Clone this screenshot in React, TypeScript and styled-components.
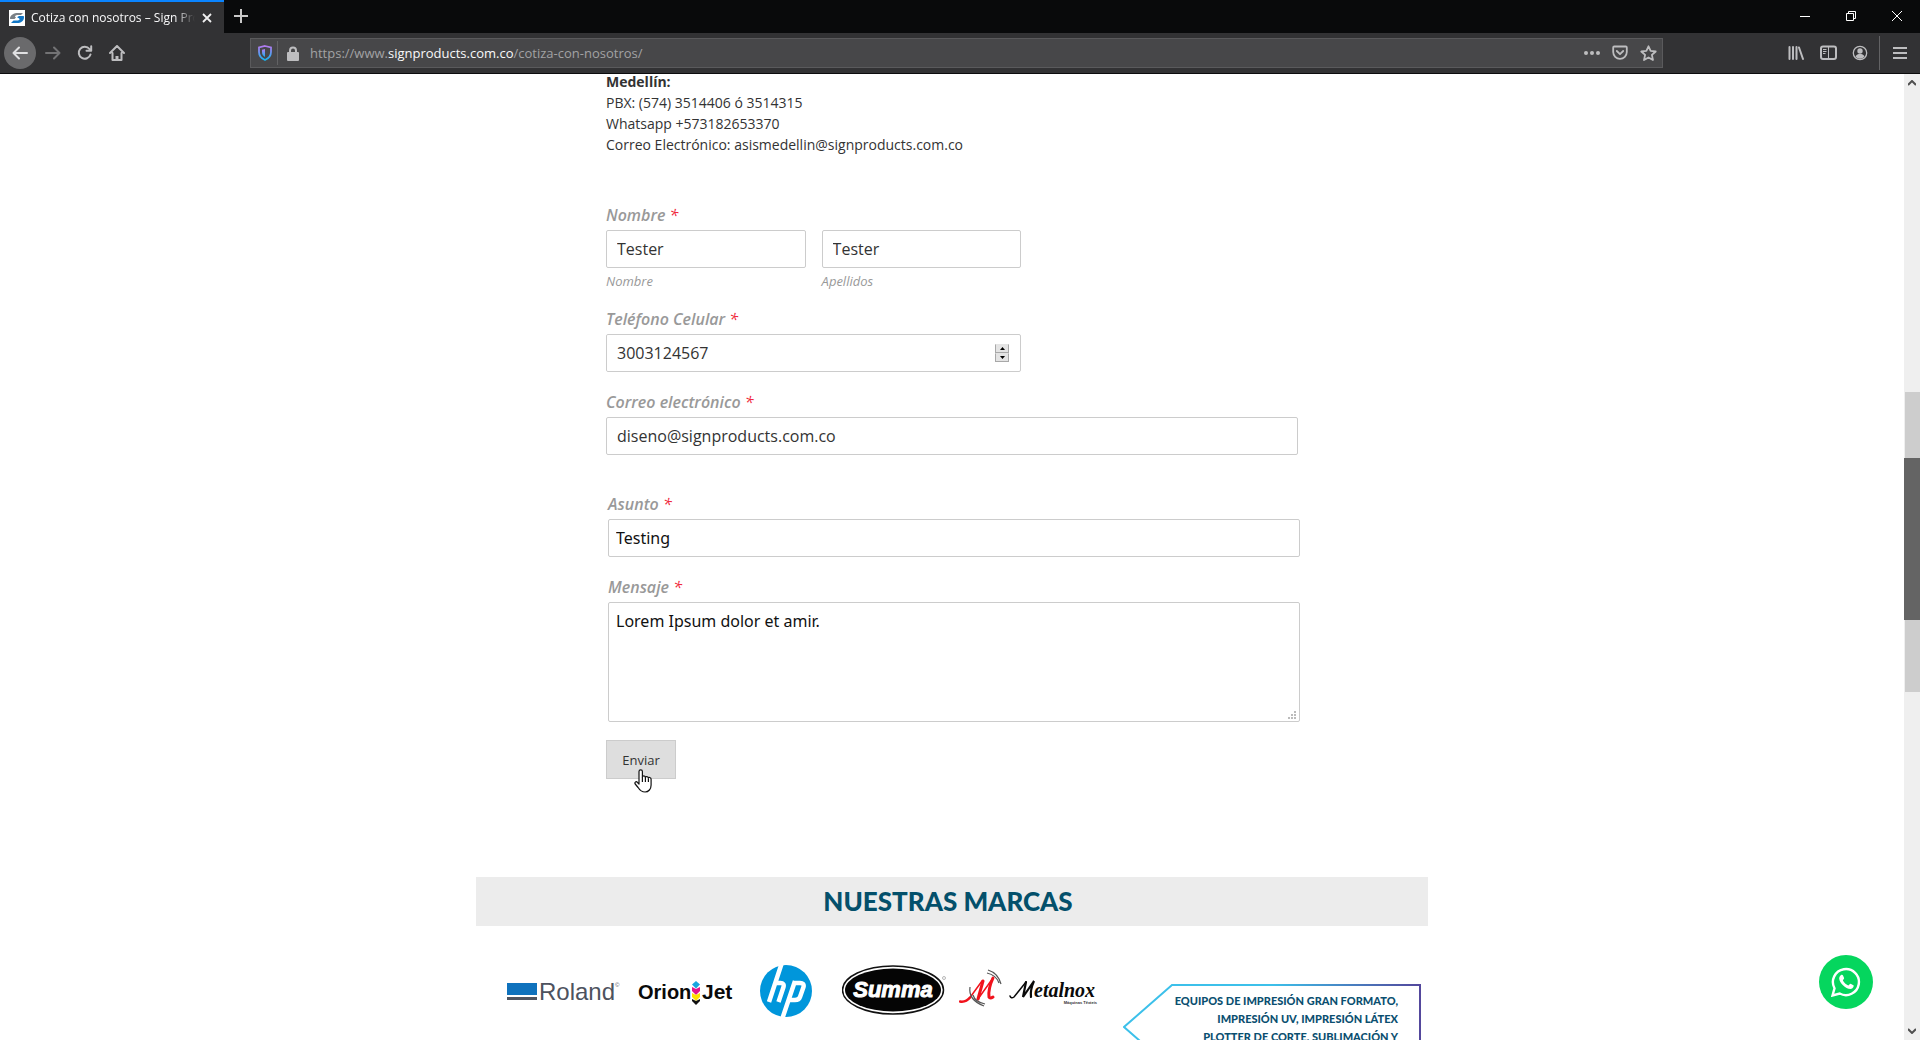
import React from "react";
import styled, { createGlobalStyle } from "styled-components";

const Global = createGlobalStyle`
  *, *::before, *::after { box-sizing: border-box; }
  body { margin: 0; background: #fff; font-family: "Open Sans", "Noto Sans", sans-serif; }
  button, input, textarea { font: inherit; color: inherit; margin: 0; }
  svg { display: block; flex: none; }
`;

const Window = styled.div`
  display: grid;
  grid-template-rows: 33px 41px minmax(0, 1fr);
  height: 100vh;
  overflow: hidden;
`;

/* Browser chrome */
const TabStrip = styled.header`
  display: flex;
  justify-content: space-between;
  background: #090a0b;
  color: #f9f9fa;
`;
const TabList = styled.div`
  display: flex;
`;
const Tab = styled.div`
  display: flex;
  align-items: center;
  width: 224px;
  padding: 0 11px 0 9px;
  gap: 6px;
  background: #323234;
  border-top: 2px solid #0a84ff;
  font-size: 12px;
`;
const TabTitle = styled.span`
  flex: 1;
  overflow: hidden;
  white-space: nowrap;
  mask-image: linear-gradient(to right, #000 calc(100% - 20px), transparent);
`;
const GhostButton = styled.button<{ $w?: number }>`
  display: flex;
  align-items: center;
  justify-content: center;
  width: ${(p) => p.$w ?? 32}px;
  height: 32px;
  padding: 0;
  border: 0;
  background: none;
  color: #bdbdbf;
`;
const BackButton = styled(GhostButton)`
  margin-right: 1px;
  border-radius: 50%;
  background: #6a6a6c;
  color: #e0e0e2;
`;
const ForwardButton = styled(GhostButton)`
  color: #737375;
`;
const CaptionButtons = styled.div`
  display: flex;
  & ${GhostButton} { color: #fff; }
`;
const Toolbar = styled.nav`
  display: flex;
  align-items: center;
  justify-content: space-between;
  padding-left: 4px;
  background: #323234;
  border-bottom: 1px solid #0c0c0d;
`;
const ToolGroup = styled.div`
  display: flex;
  align-items: center;
  width: 246px;
`;
const MenuGroup = styled(ToolGroup)`
  justify-content: flex-end;
  width: 257px;
`;
const AddressBar = styled.div`
  flex: 1;
  display: flex;
  align-items: center;
  height: 30px;
  padding: 0 0 0 2px;
  background: #474749;
  border: 1px solid #5a5a5c;
`;
const Divider = styled.span`
  width: 1px;
  height: 24px;
  background: #626264;
`;
const TallDivider = styled(Divider)`
  height: 34px;
  margin-left: 3px;
`;
const Url = styled.a`
  flex: 1;
  padding-left: 2px;
  font-size: 13px;
  color: #a2a2a4;
  text-decoration: none;
`;
const Host = styled.span`
  color: #f9f9fa;
`;

/* Page */
const Viewport = styled.div`
  display: grid;
  grid-template-columns: minmax(0, 1fr) 16px;
  min-height: 0;
  overflow: hidden;
`;
const Page = styled.main`
  min-height: 0;
  overflow: hidden;
  position: relative;
  color: #333;
`;
const Scrolled = styled.div`
  width: 952px;
  max-width: 100%;
  margin: -3px auto 0;
`;
const Column = styled.div`
  width: 692px;
  max-width: 100%;
  margin: 0 auto;
`;
const Contact = styled.address`
  font-size: 14px;
  line-height: 21px;
  font-style: normal;
`;
const Form = styled.form`
  padding-top: 46px;
`;
const Field = styled.div<{ $medium?: boolean; $gap?: number }>`
  display: flex;
  flex-direction: column;
  width: ${(p) => (p.$medium ? "60%" : "100%")};
  margin-bottom: ${(p) => p.$gap ?? 16}px;
`;
const Label = styled.label`
  height: 29px;
  padding-top: 2px;
  line-height: 24px;
  font-size: 16px;
  font-weight: 600;
  font-style: italic;
  color: #999;
`;
const Required = styled.span`
  color: #f0283c;
  font-weight: 400;
`;
const NameRow = styled.div`
  display: grid;
  grid-template-columns: 1fr 1fr;
  gap: 16px;
`;
const Input = styled.input`
  width: 100%;
  height: 38px;
  padding: 0 10px;
  border: 1px solid #ccc;
  border-radius: 2px;
  background: #fff;
  font-size: 16px;
  outline: none;
`;
const NumberBox = styled.div`
  display: flex;
  align-items: center;
  padding-right: 11px;
  border: 1px solid #ccc;
  border-radius: 2px;
`;
const NumberInput = styled(Input)`
  height: 36px;
  border: 0;
  appearance: textfield;
  &::-webkit-inner-spin-button { display: none; }
`;
const Spinner = styled.div`
  display: grid;
  flex: none;
`;
const SpinButton = styled.button`
  display: grid;
  place-items: center;
  width: 14px;
  height: 9px;
  padding: 0;
  border: 1px solid #a8a8a8;
  border-top-color: #e4e4e4;
  background: #e4e4e4;
  color: #111;
`;
const SubLabel = styled.label`
  height: 28px;
  padding-top: 4px;
  font-size: 13px;
  line-height: 18px;
  font-style: italic;
  color: #999;
`;
const MessageGroup = styled.div`
  margin: 0 -2px 0 2px;
  color: #111;
`;
const PlainInput = styled(Input)`
  padding: 0 7px;
  font-family: "Noto Sans", sans-serif;
`;
const AreaWrap = styled.div`
  position: relative;
  height: 120px;
`;
const TextArea = styled.textarea`
  display: block;
  width: 100%;
  height: 120px;
  padding: 6px 7px;
  border: 1px solid #ccc;
  border-radius: 2px;
  font: 16px/24px "Noto Sans", sans-serif;
  resize: none;
  outline: none;
`;
const Grip = styled.svg`
  position: absolute;
  right: 4px;
  bottom: 3px;
`;
const SubmitRow = styled.div`
  position: relative;
  width: max-content;
`;
const Submit = styled.button`
  display: block;
  width: 70px;
  height: 39px;
  padding: 0;
  border: 1px solid #ccc;
  background: #dedede;
  font-size: 13px;
`;
const Pointer = styled.svg`
  position: absolute;
  left: 28px;
  top: 29px;
`;

const Banner = styled.h2`
  margin: 98px 0 0;
  padding-right: 8px;
  height: 49px;
  background: #ececec;
  color: #04506b;
  font: 900 26px/48px Lato, sans-serif;
  text-align: center;
`;
const Brands = styled.section`
  display: flex;
  justify-content: space-between;
  padding: 39px 6px 0 31px;
`;
const LogoRow = styled.div`
  display: flex;
  align-items: flex-start;
`;
const Callout = styled.div`
  position: relative;
  width: 299px;
  margin-top: 19px;
`;
const CalloutShape = styled.svg`
  position: absolute;
  inset: 0;
`;
const CalloutText = styled.p`
  position: relative;
  margin: 0;
  padding: 8px 24px 0 0;
  font: 900 11px/18px Lato, sans-serif;
  color: #0b4f70;
  text-align: right;
  white-space: nowrap;
`;
const WhatsApp = styled.a`
  position: absolute;
  right: 31px;
  bottom: 31px;
  display: grid;
  place-items: center;
  width: 54px;
  height: 54px;
  border-radius: 50%;
  background: #05d65e;
`;

/* Scroll bar */
const ScrollTrack = styled.div`
  display: flex;
  flex-direction: column;
  align-items: center;
  background: #efefef;
`;
const ScrollButton = styled(GhostButton)`
  width: 16px;
  height: 18px;
  color: #505050;
`;
const ThumbRange = styled.div`
  display: flex;
  flex-direction: column;
  width: 15px;
  flex: 300;
  background: #cdcdcd;
`;
const Thumb = styled.div`
  flex: 162;
  margin: 0 -1px;
  background: #646464;
`;
const TrackSpace = styled.div<{ $grow: number }>`
  flex: ${(p) => p.$grow};
`;

type IconProps = { d: string; size?: number; width?: number };
const Stroke = ({ d, size = 16, width = 2 }: IconProps) => (
  <svg width={size} height={size} viewBox="0 0 16 16" fill="none" stroke="currentColor" strokeWidth={width} strokeLinecap="round" strokeLinejoin="round" aria-hidden="true">
    <path d={d} />
  </svg>
);

const Favicon = () => (
  <svg width="16" height="16" viewBox="0 0 16 16" aria-hidden="true">
    <path fill="#fff" d="M0 0h16v16H0z" />
    <path fill="#7b8086" d="M1 8.500C1 5 5 3 9 3h5l-2 2H9C6.500 5 5 6.500 7 7.500L5.500 9H2C1.300 9 1 9 1 8.500z" />
    <path fill="#1176c5" d="M15 7c0 4-3 6-7 6H2l2.500-2.500H8c2.500 0 3.500-1.500 1.500-2.500L8 7.300 10 6h4c.7 0 1 .4 1 1z" />
  </svg>
);

const Star = () => <Stroke size={17} width={1.7} d="M8 1.2l2 4.4 4.8.5-3.6 3.2 1 4.8L8 11.7l-4.2 2.4 1-4.8L1.200 6.100l4.800-.5z" />;

const Chrome = () => (
  <>
    <TabStrip>
      <TabList>
        <Tab>
          <Favicon />
          <TabTitle>Cotiza con nosotros – Sign Products</TabTitle>
          <GhostButton $w={12} aria-label="Cerrar pestaña"><svg width="10" height="10" viewBox="0 0 10 10" stroke="#f0f0f0" strokeWidth="1.8"><path d="M1 1l8 8M9 1L1 9" /></svg></GhostButton>
        </Tab>
        <GhostButton $w={34} aria-label="Nueva pestaña"><svg width="14" height="14" viewBox="0 0 14 14" stroke="#c8c8c8" strokeWidth="2"><path d="M7 0v14M0 7h14" /></svg></GhostButton>
      </TabList>
      <CaptionButtons>
        <GhostButton $w={46} aria-label="Minimizar"><svg width="10" height="10" stroke="#fff"><path d="M0 5.500h10" /></svg></GhostButton>
        <GhostButton $w={46} aria-label="Restaurar"><svg width="10" height="10" fill="none" stroke="#fff"><path d="M.5 2.500h7v7h-7zM2.500 2.500v-2h7v7h-2" /></svg></GhostButton>
        <GhostButton $w={46} aria-label="Cerrar"><svg width="10" height="10" stroke="#fff"><path d="M0 0l10 10M10 0L0 10" /></svg></GhostButton>
      </CaptionButtons>
    </TabStrip>
    <Toolbar>
      <ToolGroup>
        <BackButton aria-label="Atrás"><Stroke d="M15 8H1.500M7 2.500L1.500 8 7 13.500" /></BackButton>
        <ForwardButton aria-label="Adelante"><Stroke d="M1 8h13.500M9 2.500L14.500 8 9 13.500" /></ForwardButton>
        <GhostButton aria-label="Recargar"><Stroke d="M13.500 9.500A6 6 0 1 1 12.500 4M14.200 1.200v4.500H9.500" /></GhostButton>
        <GhostButton aria-label="Inicio">
          <svg width="16" height="16" viewBox="0 0 16 16" fill="none" stroke="currentColor" strokeWidth="2" strokeLinejoin="round" strokeLinecap="round"><path d="M1 8l7-7 7 7M3.500 8v7h9V8" /><path d="M8 15v-4" strokeWidth="3" strokeLinecap="butt" /></svg>
        </GhostButton>
      </ToolGroup>
      <AddressBar>
        <GhostButton $w={24} aria-label="Protección">
          <svg width="14" height="16" viewBox="0 0 14 16" fill="none">
            <defs><linearGradient id="shield" x1="0" y1="0" x2="0" y2="1"><stop stopColor="#b47aef" /><stop offset="1" stopColor="#18b4f0" /></linearGradient></defs>
            <path d="M7 1l6 1.500v4.500c0 4-2.500 6.500-6 8-3.500-1.500-6-4-6-8V2.500z" stroke="url(#shield)" strokeWidth="1.800" />
            <path d="M7 4v8c-2-1.200-3-2.500-3-5V4.700z" fill="url(#shield)" />
          </svg>
        </GhostButton>
        <Divider />
        <GhostButton $w={30} aria-label="Conexión segura">
          <svg width="12" height="15" viewBox="0 0 12 15"><path d="M3 7V4.500a3 3 0 0 1 6 0V7" fill="none" stroke="currentColor" strokeWidth="2" /><rect y="6" width="12" height="9" rx="1" fill="currentColor" /></svg>
        </GhostButton>
        <Url href="#cotiza">https://www.<Host>signproducts.com.co</Host>/cotiza-con-nosotros/</Url>
        <GhostButton $w={28} aria-label="Acciones"><svg width="16" height="4" fill="currentColor"><circle cx="2" cy="2" r="2" /><circle cx="8" cy="2" r="2" /><circle cx="14" cy="2" r="2" /></svg></GhostButton>
        <GhostButton $w={28} aria-label="Pocket"><Stroke width={1.800} d="M2.200 1.500h11.600c.6 0 1 .4 1 1v4.500a6.800 6.800 0 0 1-13.600 0V2.500c0-.6.400-1 1-1zM4.800 6L8 9.200 11.200 6" /></GhostButton>
        <GhostButton $w={28} aria-label="Marcador"><Star /></GhostButton>
      </AddressBar>
      <MenuGroup>
        <GhostButton aria-label="Biblioteca"><Stroke width={2} d="M1.500 2v12M5 2v12M8.500 2v12M11 2.500L15 14" /></GhostButton>
        <GhostButton aria-label="Barra lateral"><svg width="17" height="16" viewBox="0 0 17 16" fill="none" stroke="currentColor"><rect x="1" y="1.500" width="15" height="12.500" rx="2" strokeWidth="2" /><path d="M8.500 2v12M3 4.500h3.500M3 6.500h3.500M3 8.500h2.500" /></svg></GhostButton>
        <GhostButton aria-label="Cuenta"><svg width="16" height="16" viewBox="0 0 16 16"><circle cx="8" cy="8" r="6.700" fill="none" stroke="currentColor" strokeWidth="1.300" /><circle cx="8" cy="6" r="2.700" fill="currentColor" /><path d="M3.500 11.500C4.500 9.500 6 9 8 9s3.500.5 4.500 2.500a5.500 5.500 0 0 1-9 0z" fill="currentColor" /></svg></GhostButton>
        <TallDivider />
        <GhostButton $w={40} aria-label="Menú"><svg width="14" height="12" viewBox="0 0 14 12" stroke="currentColor" strokeWidth="2"><path d="M0 1h14M0 6h14M0 11h14" /></svg></GhostButton>
      </MenuGroup>
    </Toolbar>
  </>
);

const Logos = () => (
  <LogoRow>
    <svg width="130" height="54" viewBox="0 0 130 54" role="img" aria-label="Roland">
      <path fill="#0f72bd" d="M0 18h30v12H0z" /><path fill="#505560" d="M0 32h30v3H0z" />
      <text x="32" y="34.500" fontFamily="Liberation Sans, sans-serif" fontSize="24" fill="#4d525e">Roland</text>
      <text x="108" y="22" fontFamily="Liberation Sans, sans-serif" fontSize="6" fill="#4d525e">©</text>
    </svg>
    <svg width="123" height="54" viewBox="0 0 123 54" role="img" aria-label="Orion Jet">
      <text x="1" y="34" fontFamily="Liberation Sans, sans-serif" fontWeight="700" fontSize="20" fill="#0a0a0a">Orion</text>
      <text x="65" y="34" fontFamily="Liberation Sans, sans-serif" fontWeight="700" fontSize="21" fill="#0a0a0a">Jet</text>
      <path fill="#16a6df" d="M59 16l4 3.500-4 4-4-4z" /><path fill="#e2148c" d="M55 22l4 2 4-2v4l-4 4-4-4z" /><path fill="#ffe100" d="M55 28l4 2 4-2v4l-4 4-4-4z" /><path fill="#111" d="M55 34l4 2 4-2v2l-4 4-4-4z" />
    </svg>
    <svg width="82" height="54" viewBox="0 0 82 54" role="img" aria-label="hp">
      <ellipse cx="26" cy="26" rx="26" ry="26" fill="#0096db" />
      <g fill="none" stroke="#fff" strokeWidth="4.500" strokeLinejoin="round"><path d="M21.500-1L9 37M14.500 18h6q4 0 3 4L18.500 37M35 16L22.500 53M34 18h6q4.500 0 3.500 4l-3.500 10q-1 3-5 3h-6" /></g>
    </svg>
    <svg width="117" height="54" viewBox="0 0 117 54" role="img" aria-label="Summa">
      <ellipse cx="51" cy="25" rx="50.500" ry="24" fill="#fff" stroke="#111" strokeWidth="1.500" /><ellipse cx="51" cy="25" rx="48" ry="21.500" fill="#050505" />
      <text x="51" y="32" textAnchor="middle" fontFamily="Liberation Sans, sans-serif" fontWeight="700" fontStyle="italic" fontSize="22" fill="#fff" stroke="#fff" strokeWidth="1">Summa</text>
      <circle cx="102" cy="13" r="1.500" fill="none" stroke="#888" strokeWidth=".6" />
    </svg>
    <svg width="142" height="54" viewBox="0 0 142 54" role="img" aria-label="Metalnox">
      <g fill="none" stroke="#f1121c" strokeLinecap="round"><path strokeWidth="2.500" d="M1 36.500q6 1 10-4" /><path strokeWidth="1.500" d="M11 32.500L23 16" /><path strokeWidth="3" d="M24 16L19 34" /><path strokeWidth="1.500" d="M19 34L34 13" /><path strokeWidth="3" d="M34 13q-5 11-4 19 1 2 4 0" /></g>
      <g fill="none" stroke="#555"><path strokeWidth="1.200" d="M29 5q10 3 13 14M28 8q9 2 12 10" /><path strokeWidth="1.200" d="M11 22Q9 35 25 41M14 30q2 7 12 9" /></g>
      <g fill="none" stroke="#0a0a0a" strokeLinecap="round"><path strokeWidth="1.500" d="M51 31q1 3 4 1l12-15" /><path strokeWidth="2.200" d="M67 17l-3 15 11-16q-4 9-3 16" /></g>
      <text x="75" y="32" fontFamily="Liberation Serif, serif" fontWeight="700" fontStyle="italic" fontSize="20" fill="#0a0a0a">etalnox</text>
      <text x="138" y="39" textAnchor="end" fontFamily="Liberation Sans, sans-serif" fontWeight="700" fontSize="4" fill="#333">Máquinas Têxteis</text>
    </svg>
  </LogoRow>
);

const Mark = () => <Required aria-hidden="true">*</Required>;

export default function App() {
  return (
    <Window>
      <Global />
      <Chrome />
      <Viewport>
        <Page>
          <Scrolled>
            <Column>
              <Contact>
                <strong>Medellín:</strong><br />
                PBX: (574) 3514406 ó 3514315<br />
                Whatsapp +573182653370<br />
                Correo Electrónico: asismedellin@signproducts.com.co
              </Contact>
              <Form onSubmit={(e) => e.preventDefault()}>
                <Field $medium $gap={9}>
                  <Label htmlFor="nombre">Nombre <Mark /></Label>
                  <NameRow>
                    <Input id="nombre" defaultValue="Tester" />
                    <Input id="apellidos" defaultValue="Tester" />
                  </NameRow>
                  <NameRow>
                    <SubLabel htmlFor="nombre">Nombre</SubLabel>
                    <SubLabel htmlFor="apellidos">Apellidos</SubLabel>
                  </NameRow>
                </Field>
                <Field $medium>
                  <Label htmlFor="telefono">Teléfono Celular <Mark /></Label>
                  <NumberBox>
                    <NumberInput id="telefono" type="number" defaultValue="3003124567" />
                    <Spinner>
                      <SpinButton type="button" aria-label="Aumentar"><svg width="5" height="3"><path d="M0 3h5L2.500 0z" /></svg></SpinButton>
                      <SpinButton type="button" aria-label="Disminuir"><svg width="5" height="3"><path d="M0 0h5L2.500 3z" /></svg></SpinButton>
                    </Spinner>
                  </NumberBox>
                </Field>
                <Field $gap={35}>
                  <Label htmlFor="correo">Correo electrónico <Mark /></Label>
                  <Input id="correo" type="email" defaultValue="diseno@signproducts.com.co" />
                </Field>
                <MessageGroup>
                  <Field>
                    <Label htmlFor="asunto">Asunto <Mark /></Label>
                    <PlainInput id="asunto" defaultValue="Testing" />
                  </Field>
                  <Field $gap={18}>
                    <Label htmlFor="mensaje">Mensaje <Mark /></Label>
                    <AreaWrap>
                      <TextArea id="mensaje" defaultValue="Lorem Ipsum dolor et amir." />
                      <Grip width="8" height="8" fill="#bbb"><path d="M6 0h2v2H6zM3 3h2v2H3zM6 3h2v2H6zM0 6h2v2H0zM3 6h2v2H3zM6 6h2v2H6z" /></Grip>
                    </AreaWrap>
                  </Field>
                </MessageGroup>
                <SubmitRow>
                  <Submit type="submit">Enviar</Submit>
                  <Pointer width="18" height="24" viewBox="0 0 18 24" fill="#fff" stroke="#111" strokeWidth="1.200" strokeLinejoin="round">
                    <path d="M5 15V2.500a1.700 1.700 0 0 1 3.400 0V8c0-1.500 3-1.500 3 .5 0-1.500 3-1.200 3 .7 0-1.200 2.700-1 2.700 1V16c0 4-2.500 7-6 7-4 0-5.500-2-7-4.500L1.200 15c-1-2 1-3 2.300-1.500z" />
                    <path d="M8.400 8v5M11.400 8.500V13M14.400 9.500V13" />
                  </Pointer>
                </SubmitRow>
              </Form>
            </Column>
            <Banner>NUESTRAS MARCAS</Banner>
            <Brands>
              <Logos />
              <Callout>
                <CalloutShape width="299" height="86" viewBox="0 0 299 86" fill="none" aria-hidden="true">
                  <defs><linearGradient id="edge"><stop offset=".5" stopColor="#3cc0ea" /><stop offset="1" stopColor="#53479c" /></linearGradient></defs>
                  <path d="M49 85L1 43 49 1h248v84z" stroke="url(#edge)" strokeWidth="2" />
                </CalloutShape>
                <CalloutText>
                  EQUIPOS DE IMPRESIÓN GRAN FORMATO,<br />
                  IMPRESIÓN UV, IMPRESIÓN LÁTEX<br />
                  PLOTTER DE CORTE, SUBLIMACIÓN Y
                </CalloutText>
              </Callout>
            </Brands>
          </Scrolled>
          <WhatsApp href="#whatsapp" aria-label="WhatsApp">
            <svg width="30" height="30" viewBox="0 0 30 30">
              <path d="M1.500 28.500l2-7.200a13 13 0 1 1 5.200 5.200z" fill="none" stroke="#fff" strokeWidth="2.400" />
              <path d="M10 8c.8-.6 1.700-.4 2 .4l1.100 2.700c.2.800-1.200 1.800-1.200 2.400 1.200 2.300 3 4 5.400 4.900.8.100 1.500-1.700 2.300-1.600l2.800 1.400c.9.500-.2 3.600-2.900 3.700C14.300 21.900 8.500 15.800 8.200 11.500 8.200 10 9 8.700 10 8z" fill="#fff" />
            </svg>
          </WhatsApp>
        </Page>
        <ScrollTrack aria-hidden="true">
          <ScrollButton tabIndex={-1}><svg width="8" height="6" fill="none" stroke="currentColor" strokeWidth="2"><path d="M0 5l4-4 4 4" /></svg></ScrollButton>
          <TrackSpace $grow={300} />
          <ThumbRange>
            <TrackSpace $grow={66} />
            <Thumb />
            <TrackSpace $grow={72} />
          </ThumbRange>
          <TrackSpace $grow={330} />
          <ScrollButton tabIndex={-1}><svg width="8" height="6" fill="none" stroke="currentColor" strokeWidth="2"><path d="M0 1l4 4 4-4" /></svg></ScrollButton>
        </ScrollTrack>
      </Viewport>
    </Window>
  );
}
